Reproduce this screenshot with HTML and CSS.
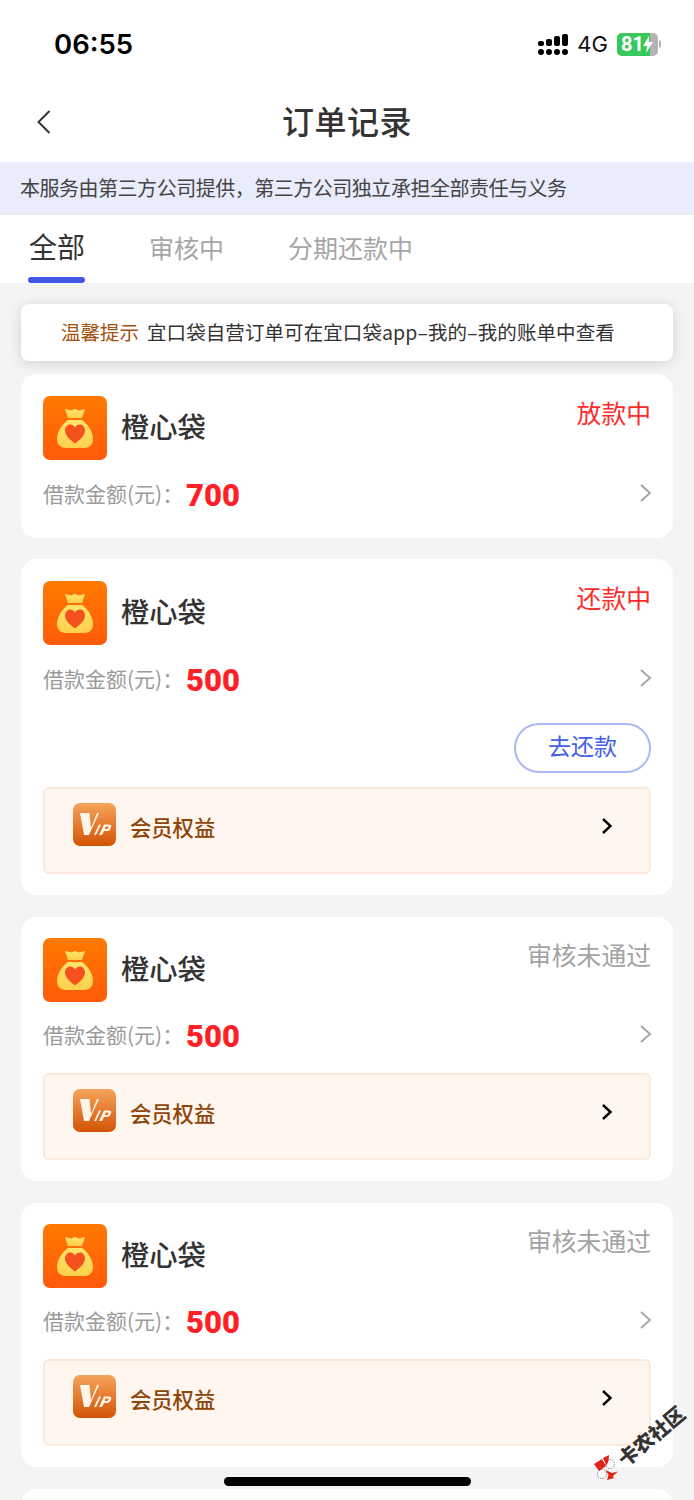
FILE: index.html
```html
<!DOCTYPE html>
<html lang="zh-CN">
<head>
    <meta charset="UTF-8">
    <title>订单记录</title>
    <link rel="stylesheet" href="styles.css">
</head>
<body>

<svg class="defs" width="0" height="0">
    <defs>
        <linearGradient id="bagBg" x1="0" y1="0" x2="0" y2="1">
            <stop offset="0" stop-color="#ff7a00"/>
            <stop offset="1" stop-color="#ff5a0a"/>
        </linearGradient>
        <linearGradient id="bagBody" x1="0" y1="0" x2="0" y2="1">
            <stop offset="0" stop-color="#ffe36c"/>
            <stop offset="1" stop-color="#ffd04a"/>
        </linearGradient>
        <linearGradient id="vipBg" x1="0" y1="0" x2="0" y2="1">
            <stop offset="0" stop-color="#f5a45c"/>
            <stop offset="1" stop-color="#d25405"/>
        </linearGradient>
        <symbol id="bag" viewBox="0 0 64 64">
            <rect width="64" height="64" rx="7" fill="url(#bagBg)"/>
            <path d="M22 13 L28.500 14.500 Q32 11.500 35.500 14.500 L42 13 L39 22 L25 22 Z" fill="url(#bagBody)"/>
            <path d="M25 24 L39 24 C45 28 50 36 50 43 C50 49 46 52 41 52 L23 52 C18 52 14 49 14 43 C14 36 19 28 25 24 Z" fill="url(#bagBody)"/>
            <path d="M32 47.500 C27 43.500 22 39.500 22 34.500 C22 31 24.500 28.500 27 28.500 C29 28.500 31 29.500 32 31.500 C33 29.500 35 28.500 37 28.500 C39.500 28.500 42 31 42 34.500 C42 39.500 37 43.500 32 47.500 Z" fill="#f4511e"/>
        </symbol>
        <symbol id="vip" viewBox="0 0 43 43">
            <rect width="43" height="43" rx="7" fill="url(#vipBg)"/>
            <path d="M7 10 H16.500 L18 25 L24 10 H26 L16 32 H11 Z" fill="#fff5e8"/>
            <path d="M21 32 L26 21.500 H28 L23 32 Z" fill="#fff5e8"/>
            <path fill-rule="evenodd" d="M26 32 L31 21.500 H36 Q39 21.500 38 24.500 L37.500 25.500 Q36.500 28 34 28 H31 L29 32 Z M32.500 23.500 L31.800 26 H34 Q35 26 35.500 25 Q36 23.500 35 23.500 Z" fill="#fff5e8"/>
        </symbol>
        <symbol id="arrow" viewBox="0 0 14 20">
            <path d="M2 2 L11 10 L2 18" fill="none" stroke="#a3a3a3" stroke-width="1.800"/>
        </symbol>
        <symbol id="arrowDark" viewBox="0 0 12 18">
            <path d="M2 2 L9.500 9 L2 16" fill="none" stroke="#000" stroke-width="2.400"/>
        </symbol>
    </defs>
</svg>

<div class="page">
    <div class="status-bar">
        <span class="time">06:55</span>
        <div class="status-icons">
            <svg width="30" height="21" viewBox="0 0 30 21">
                <g fill="#000">
                    <rect x="0" y="7" width="6" height="5" rx="2"/>
                    <rect x="8" y="5" width="6" height="7" rx="2"/>
                    <rect x="16" y="2" width="6" height="10" rx="2"/>
                    <rect x="24" y="0" width="6" height="12" rx="2"/>
                    <circle cx="3" cy="18" r="3"/>
                    <circle cx="11" cy="18" r="3"/>
                    <circle cx="19" cy="18" r="3"/>
                    <circle cx="27" cy="18" r="3"/>
                </g>
            </svg>
            <span class="net">4G</span>
            <div class="battery">
                <div class="battery-fill"></div>
                <span class="battery-num">81</span>
                <svg class="bolt" width="10" height="17" viewBox="0 0 10 17"><path d="M6 0 L0 10 H4 L3 17 L10 6 H6 Z" fill="#fff"/></svg>
            </div>
            <div class="battery-cap"></div>
        </div>
    </div>

    <div class="nav-bar">
        <svg class="back" width="14" height="24" viewBox="0 0 14 24"><path d="M12.500 1 L1.500 12 L12.500 23" fill="none" stroke="#333" stroke-width="2"/></svg>
        <span class="nav-title">订单记录</span>
    </div>

    <div class="notice">本服务由第三方公司提供，第三方公司独立承担全部责任与义务</div>

    <div class="tabs">
        <div class="tab active">全部</div>
        <div class="tab">审核中</div>
        <div class="tab">分期还款中</div>
    </div>

    <div class="list">
        <div class="tip"><span class="tip-label">温馨提示</span><span class="tip-text">宜口袋自营订单可在宜口袋app–我的–我的账单中查看</span></div>

        <div class="card card-first">
            <div class="card-head">
                <svg class="logo"><use href="#bag"/></svg>
                <span class="name">橙心袋</span>
                <span class="state red">放款中</span>
            </div>
            <div class="amount-row">
                <span class="amount-label">借款金额(元)：</span>
                <span class="amount">700</span>
                <svg class="row-arrow"><use href="#arrow"/></svg>
            </div>
        </div>

        <div class="card">
            <div class="card-head">
                <svg class="logo"><use href="#bag"/></svg>
                <span class="name">橙心袋</span>
                <span class="state red">还款中</span>
            </div>
            <div class="amount-row">
                <span class="amount-label">借款金额(元)：</span>
                <span class="amount">500</span>
                <svg class="row-arrow"><use href="#arrow"/></svg>
            </div>
            <div class="actions"><span class="pay-btn">去还款</span></div>
            <div class="vip-box">
                <svg class="vip-icon"><use href="#vip"/></svg>
                <span class="vip-text">会员权益</span>
                <svg class="vip-arrow"><use href="#arrowDark"/></svg>
            </div>
        </div>

        <div class="card card-review">
            <div class="card-head">
                <svg class="logo"><use href="#bag"/></svg>
                <span class="name">橙心袋</span>
                <span class="state">审核未通过</span>
            </div>
            <div class="amount-row">
                <span class="amount-label">借款金额(元)：</span>
                <span class="amount">500</span>
                <svg class="row-arrow"><use href="#arrow"/></svg>
            </div>
            <div class="vip-box">
                <svg class="vip-icon"><use href="#vip"/></svg>
                <span class="vip-text">会员权益</span>
                <svg class="vip-arrow"><use href="#arrowDark"/></svg>
            </div>
        </div>

        <div class="card card-review">
            <div class="card-head">
                <svg class="logo"><use href="#bag"/></svg>
                <span class="name">橙心袋</span>
                <span class="state">审核未通过</span>
            </div>
            <div class="amount-row">
                <span class="amount-label">借款金额(元)：</span>
                <span class="amount">500</span>
                <svg class="row-arrow"><use href="#arrow"/></svg>
            </div>
            <div class="vip-box">
                <svg class="vip-icon"><use href="#vip"/></svg>
                <span class="vip-text">会员权益</span>
                <svg class="vip-arrow"><use href="#arrowDark"/></svg>
            </div>
        </div>

        <div class="card"></div>
    </div>

    <div class="home-bar"></div>

    <svg class="wm-logo" width="25" height="25" viewBox="0 0 25 25">
        <circle cx="17" cy="9" r="4.500" fill="#fff" stroke="#333" stroke-width="0.600" stroke-dasharray="1.500 1"/>
        <circle cx="9" cy="19" r="4.500" fill="#fff" stroke="#333" stroke-width="0.600" stroke-dasharray="1.500 1"/>
        <path d="M1 9 L9 4 L13 11 L6 16 Z" fill="#e2231a"/>
        <path d="M10 3 L16 0 L15.500 6 L13.500 10.500 Z" fill="#e2231a"/>
        <path d="M12.500 15 L19 18 L25 16.500 L20 21 L21 23 L14 25 L15.500 20 Z" fill="#e2231a"/>
    </svg>
    <span class="wm-text">卡农社区</span>
</div>

</body>
</html>
```

FILE: styles.css
```css
* {
    box-sizing: border-box;
}
html, body {
    margin: 0;
    padding: 0;
}
body {
    font-family: "Noto Sans CJK SC", "Noto Sans", sans-serif;
    background: #f4f4f4;
}
.defs {
    position: absolute;
}
.page {
    position: relative;
    width: 694px;
    height: 1500px;
    overflow: hidden;
    background: #f4f4f4;
}

/* top of the phone */
.status-bar {
    height: 88px;
    background: #fff;
    display: flex;
    justify-content: space-between;
    align-items: flex-start;
    padding: 26px 33px 0 54px;
}
.time {
    font-family: Inter, "Liberation Sans", sans-serif;
    font-size: 27.500px;
    line-height: 36px;
    font-weight: 600;
    color: #000;
}
.status-icons {
    display: flex;
    align-items: center;
    height: 36px;
}
.net {
    font-family: Inter, "Liberation Sans", sans-serif;
    font-size: 22px;
    margin-left: 9px;
    color: #111;
}
.battery {
    position: relative;
    width: 41px;
    height: 23px;
    margin-left: 9px;
    background: #b4b4b4;
    border-radius: 5px;
    overflow: hidden;
}
.battery-fill {
    width: 33px;
    height: 23px;
    background: #37c95c;
}
.battery-num {
    position: absolute;
    left: 4px;
    top: 0;
    font-family: Roboto, "Liberation Sans", sans-serif;
    font-size: 20px;
    line-height: 23px;
    font-weight: 700;
    color: #fff;
}
.bolt {
    position: absolute;
    left: 26px;
    top: 3px;
}
.battery-cap {
    width: 2px;
    height: 8px;
    margin-left: 1px;
    background: #b4b4b4;
    border-radius: 0 2px 2px 0;
}

.nav-bar {
    position: relative;
    height: 74px;
    padding-bottom: 10px;
    background: #fff;
    display: flex;
    justify-content: center;
    align-items: center;
}
.back {
    position: absolute;
    left: 37px;
    top: 22px;
}
.nav-title {
    font-size: 32px;
    font-weight: 500;
    color: #333;
    letter-spacing: 0.500px;
}

.notice {
    height: 53px;
    line-height: 51px;
    padding-left: 20px;
    background: #e8ecfb;
    font-size: 20px;
    color: #444;
    letter-spacing: -0.480px;
}

.tabs {
    height: 68px;
    background: #fff;
    display: flex;
    align-items: flex-start;
    gap: 64px;
    padding: 0 0 0 28px;
}
.tab {
    position: relative;
    font-size: 25px;
    color: #a6a6a6;
    line-height: 64px;
}
.tab.active {
    font-size: 28px;
    width: 57px;
    text-align: right;
    line-height: 62px;
    height: 68px;
    color: #333;
}
.tab.active::after {
    content: "";
    position: absolute;
    left: 0;
    right: 0;
    bottom: 0;
    height: 6px;
    background: #3f56e6;
    border-radius: 3px;
}

/* order list */
.list {
    padding: 21px 21px 0;
    display: flex;
    flex-direction: column;
    gap: 22px;
}
.tip {
    height: 57px;
    line-height: 55px;
    padding-left: 40px;
    background: #fff;
    border-radius: 8px;
    box-shadow: 0 2px 14px rgba(0, 0, 0, 0.14);
    font-size: 19.500px;
    color: #333;
    white-space: nowrap;
    margin-bottom: -9px;
    position: relative;
}
.tip-label {
    color: #a2510f;
}
.tip-text {
    margin-left: 8px;
    letter-spacing: 0.080px;
}
.card {
    background: #fff;
    border-radius: 16px;
    padding: 22px 22px 21px;
    flex-shrink: 0;
}
.card-first {
    height: 164px;
    margin-bottom: -1px;
}
.card-review {
    padding-top: 21px;
}
.card-head {
    display: flex;
    height: 64px;
    align-items: flex-start;
}
.logo {
    width: 64px;
    height: 64px;
}
.name {
    font-size: 28.300px;
    font-weight: 500;
    color: #333;
    margin-left: 14px;
    line-height: 60px;
}
.state {
    margin-left: auto;
    font-size: 24.800px;
    line-height: 32px;
    color: #a3a3a3;
}
.state.red {
    color: #ff2b2b;
}
.amount-row {
    display: flex;
    align-items: center;
    height: 44px;
    margin-top: 13px;
}
.card-review .amount-row {
    margin-top: 12px;
}
.amount-label {
    font-size: 21px;
    color: #9a9a9a;
    width: 143px;
    white-space: nowrap;
    margin-bottom: 4px;
}
.amount {
    font-family: Roboto, "Liberation Sans", sans-serif;
    font-size: 31px;
    font-weight: 900;
    color: #ff1f26;
}
.row-arrow {
    width: 14px;
    height: 20px;
    margin-left: auto;
    margin-right: -2px;
    margin-bottom: 4px;
}
.actions {
    display: flex;
    justify-content: flex-end;
    margin-top: 21px;
    margin-bottom: 14px;
}
.pay-btn {
    width: 137px;
    height: 50px;
    line-height: 40px;
    text-align: center;
    border: 2px solid #aab8f5;
    border-radius: 25px;
    font-size: 23px;
    color: #4560e8;
}
.vip-box {
    height: 87px;
    margin-top: 15px;
    padding-left: 28px;
    display: flex;
    align-items: center;
    background: #fff6f0;
    border: 2px solid #fde8dc;
    border-radius: 6px;
}
.actions + .vip-box {
    margin-top: 0;
}
.vip-icon {
    width: 43px;
    height: 43px;
    margin-top: -13px;
}
.vip-text {
    font-size: 21.300px;
    font-weight: 500;
    color: #8f4508;
    margin-left: 14px;
    margin-bottom: 8px;
}
.vip-arrow {
    width: 12px;
    height: 18px;
    margin-left: auto;
    margin-right: 36px;
    margin-top: -9px;
}

/* things lying over the page */
.home-bar {
    position: absolute;
    left: 224px;
    top: 1477px;
    width: 247px;
    height: 9px;
    background: #000;
    border-radius: 5px;
}
.wm-logo {
    position: absolute;
    left: 593px;
    top: 1455px;
}
.wm-text {
    position: absolute;
    left: 611px;
    top: 1422px;
    width: 80px;
    line-height: 28px;
    font-size: 20px;
    font-weight: 900;
    color: #333;
    white-space: nowrap;
    transform: rotate(-40deg);
}
```
